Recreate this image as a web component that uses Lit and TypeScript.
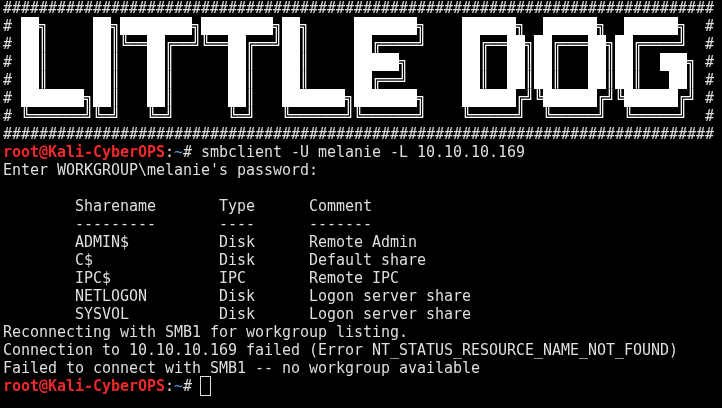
import { LitElement, html, css } from "lit";
import { customElement } from "lit/decorators.js";

const banner = [
  "#".repeat(79),
  "# ██╗     ██╗████████╗████████╗██╗     ███████╗    ██████╗  ██████╗  ██████╗  #",
  "# ██║     ██║╚══██╔══╝╚══██╔══╝██║     ██╔════╝    ██╔══██╗██╔═══██╗██╔════╝  #",
  "# ██║     ██║   ██║      ██║   ██║     █████╗      ██║  ██║██║   ██║██║  ███╗ #",
  "# ██║     ██║   ██║      ██║   ██║     ██╔══╝      ██║  ██║██║   ██║██║   ██║ #",
  "# ███████╗██║   ██║      ██║   ███████╗███████╗    ██████╔╝╚██████╔╝╚██████╔╝ #",
  "# ╚══════╝╚═╝   ╚═╝      ╚═╝   ╚══════╝╚══════╝    ╚═════╝  ╚═════╝  ╚═════╝  #",
  "#".repeat(79),
];

const output = [
  "Enter WORKGROUP\\melanie's password:",
  "",
  "        Sharename       Type      Comment",
  "        ---------       ----      -------",
  "        ADMIN$          Disk      Remote Admin",
  "        C$              Disk      Default share",
  "        IPC$            IPC       Remote IPC",
  "        NETLOGON        Disk      Logon server share",
  "        SYSVOL          Disk      Logon server share",
  "Reconnecting with SMB1 for workgroup listing.",
  "Connection to 10.10.10.169 failed (Error NT_STATUS_RESOURCE_NAME_NOT_FOUND)",
  "Failed to connect with SMB1 -- no workgroup available",
];

@customElement("app-root")
export class AppRoot extends LitElement {
  static styles = css`
    :host {
      display: block;
      width: 722px;
      height: 408px;
      overflow: hidden;
      background: #000;
    }
    .term {
      margin-top: -1px;
      padding-left: 3px;
      font-family: "DejaVu Sans Mono", monospace;
      font-size: 15px;
      line-height: 18px;
      color: #dedede;
      will-change: transform;
    }
    .line {
      height: 18px;
      white-space: pre;
      display: flex;
    }
    .cell {
      flex: none;
      width: 9px;
      height: 18px;
      display: block;
    }
    .box {
      color: #fff;
    }
    .block {
      flex: none;
      display: block;
      height: 18px;
      background: #fff;
      color: #fff;
      overflow: hidden;
    }
    .text {
      letter-spacing: -0.03px;
    }
    .user {
      color: #ef2929;
      font-weight: 700;
    }
    .path {
      color: #4f9bd9;
    }
    .cursor {
      display: inline-block;
      box-sizing: border-box;
      width: 11px;
      height: 20px;
      margin: -1px 0 -1px -1px;
      border: 1px solid #dedede;
      vertical-align: top;
    }
  `;

  private bannerLine(l: string) {
    const runs = l.match(/█+|[^█]/g) ?? [];
    return html`<div class="line">
      ${runs.map((r) =>
        r[0] === "█"
          ? html`<span class="block" style="width:${r.length * 9}px">${r}</span>`
          : html`<span class="cell ${r === "#" ? "" : "box"}">${r}</span>`
      )}
    </div>`;
  }

  private prompt(command: string) {
    return html`<span class="user">root@Kali-CyberOPS</span>:<span class="path">~</span># ${command}`;
  }

  render() {
    return html`<div class="term">
      ${banner.map((l) => this.bannerLine(l))}
      <div class="text line"><span>${this.prompt("smbclient -U melanie -L 10.10.10.169")}</span></div>
      ${output.map((l) => html`<div class="text line"><span>${l}</span></div>`)}
      <div class="text line"><span>${this.prompt("")}<span class="cursor"></span></span></div>
    </div>`;
  }
}
